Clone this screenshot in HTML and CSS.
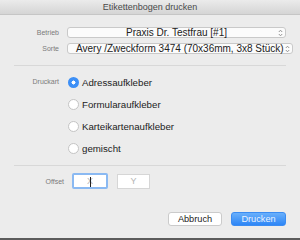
FILE: index.html
```html
<!DOCTYPE html>
<html lang="de">
<head>
<meta charset="utf-8">
<title>Etikettenbogen drucken</title>
<link rel="stylesheet" href="styles.css">
</head>
<body>
<div class="window">
  <div class="titlebar">Etikettenbogen drucken</div>
  <div class="content">
    <div class="row row-popup">
      <span class="lbl">Betrieb</span>
      <div class="popup popup-center">
        <span class="popup-text">Praxis Dr. Testfrau [#1]</span>
        <svg class="chev" width="5" height="8" viewBox="0 0 5 8"><path d="M0.8 3 L2.5 1.2 L4.2 3 M0.8 5 L2.5 6.8 L4.2 5" fill="none" stroke="#8a8a8a" stroke-width="0.9"/></svg>
      </div>
    </div>
    <div class="row row-popup row-sorte">
      <span class="lbl">Sorte</span>
      <div class="popup">
        <span class="popup-text">Avery /Zweckform 3474 (70x36mm, 3x8 Stück)</span>
        <svg class="chev" width="5" height="8" viewBox="0 0 5 8"><path d="M0.8 3 L2.5 1.2 L4.2 3 M0.8 5 L2.5 6.8 L4.2 5" fill="none" stroke="#8a8a8a" stroke-width="0.9"/></svg>
      </div>
    </div>
    <div class="sep sep-1"></div>
    <div class="row row-radios">
      <span class="lbl lbl-top">Druckart</span>
      <div class="radios">
        <div class="radio-item"><span class="radio radio-on"></span><span>Adressaufkleber</span></div>
        <div class="radio-item"><span class="radio"></span><span>Formularaufkleber</span></div>
        <div class="radio-item"><span class="radio"></span><span>Karteikartenaufkleber</span></div>
        <div class="radio-item"><span class="radio"></span><span>gemischt</span></div>
      </div>
    </div>
    <div class="sep sep-2"></div>
    <div class="row row-offset">
      <span class="lbl lbl-offset">Offset</span>
      <div class="field field-focus"><span class="ph">X</span><span class="caret"></span></div>
      <div class="field"><span class="ph">Y</span></div>
    </div>
    <div class="buttons">
      <button class="btn">Abbruch</button>
      <button class="btn btn-primary">Drucken</button>
    </div>
  </div>
  <div class="bottomline"></div>
</div>
</body>
</html>
```

FILE: styles.css
```css
html, body {
  margin: 0;
  padding: 0;
}
body {
  width: 300px;
  height: 240px;
  overflow: hidden;
  background: #ececec;
  font-family: "Liberation Sans", Arial, sans-serif;
  color: #262626;
}
.window {
  width: 300px;
  height: 240px;
  display: flex;
  flex-direction: column;
  background: #ececec;
}
.titlebar {
  height: 14px;
  line-height: 14px;
  border-bottom: 1px solid #c6c6c6;
  background: linear-gradient(#ebebeb, #d5d5d5);
  text-align: center;
  font-size: 9px;
  color: #4a4a4a;
  flex: none;
}
.content {
  flex: 1;
  display: flex;
  flex-direction: column;
  padding: 12px 14px 0 0;
}
.row {
  display: flex;
  align-items: center;
}
.lbl {
  width: 59px;
  flex: none;
  text-align: right;
  font-size: 7px;
  color: #7b7b7b;
  margin-right: 8px;
}
.row-popup {
  height: 11px;
}
.row-sorte {
  margin-top: 5px;
}
.popup {
  flex: 1;
  height: 11px;
  box-sizing: border-box;
  border: 1px solid #c9c9c9;
  border-radius: 3px;
  background: #fbfbfb;
  display: flex;
  align-items: center;
  padding: 0 2px 0 8px;
  font-size: 10px;
  line-height: 9px;
  color: #222;
}
.popup-text {
  flex: 1;
  white-space: nowrap;
}
.popup-center .popup-text {
  text-align: center;
}
.chev {
  flex: none;
  margin-left: 1px;
}
.sep {
  height: 1px;
  background: #d8d8d8;
  margin-left: 14px;
}
.sep-1 {
  margin-top: 11px;
}
.row-radios {
  align-items: flex-start;
  margin-top: 5px;
}
.lbl-top {
  margin-top: 7px;
}
.radios {
  display: flex;
  flex-direction: column;
}
.radio-item {
  height: 22px;
  display: flex;
  align-items: center;
  font-size: 9.7px;
  color: #222;
}
.radio {
  width: 11px;
  height: 11px;
  box-sizing: border-box;
  border-radius: 50%;
  border: 1px solid #c4c4c4;
  background: #fff;
  margin: 0 3px 0 1px;
  flex: none;
}
.radio-on {
  border: none;
  background: radial-gradient(circle, #fff 0 1.8px, #3d8ff6 2.2px);
}
.sep-2 {
  margin-top: 6px;
}
.row-offset {
  margin-top: 7px;
  height: 16px;
}
.lbl-offset {
  width: 64px;
  margin-right: 8px;
}
.field {
  position: relative;
  width: 33px;
  height: 15px;
  box-sizing: border-box;
  border: 1px solid #d6d6d6;
  background: #fff;
  display: flex;
  align-items: center;
  justify-content: center;
  margin-right: 10px;
}
.field-focus {
  width: 36px;
  height: 16px;
  border: 2px solid #8ab9f2;
  border-radius: 2px;
  margin-right: 9px;
}
.ph {
  font-size: 9px;
  color: #b5b5b5;
}
.caret {
  position: absolute;
  left: 16px;
  top: 2px;
  width: 1px;
  height: 10px;
  background: #222;
}
.buttons {
  display: flex;
  justify-content: flex-end;
  gap: 9px;
  margin-top: 23px;
}
.btn {
  height: 14px;
  box-sizing: border-box;
  border: 1px solid #cbcbcb;
  border-radius: 3px;
  background: #fff;
  font-family: "Liberation Sans", Arial, sans-serif;
  font-size: 9.2px;
  line-height: 12px;
  color: #222;
  padding: 0;
  width: 54px;
}
.btn-primary {
  width: 55px;
  border: 1px solid #3b8cf2;
  background: linear-gradient(#6ab0fb, #2d86f6);
  color: #eaf3ff;
}
.bottomline {
  height: 2px;
  background: #5c5c5c;
  flex: none;
}
```
